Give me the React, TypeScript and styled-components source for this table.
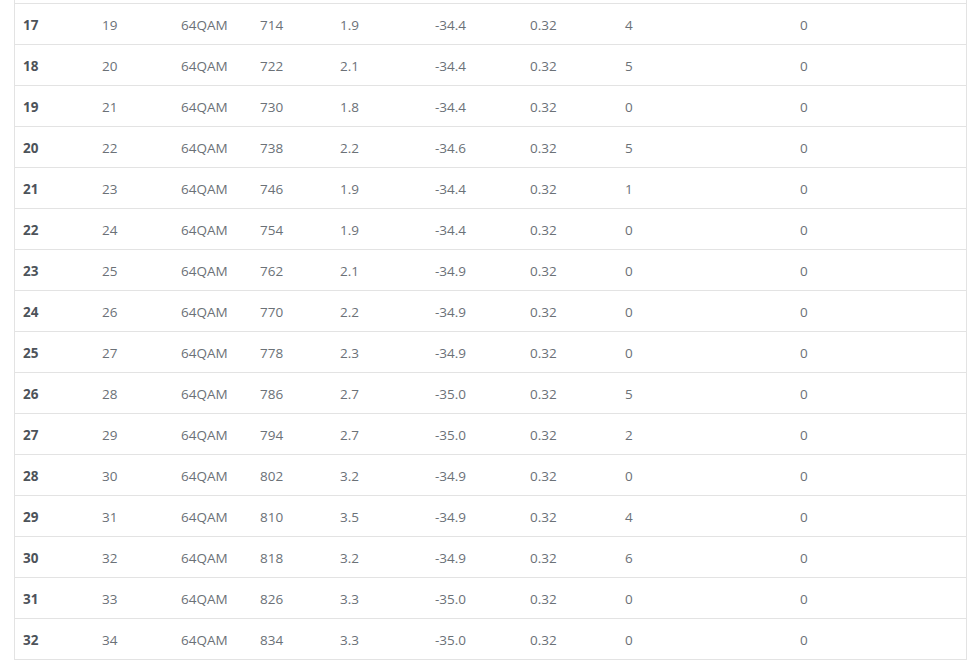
import React from 'react'
import styled, { createGlobalStyle } from 'styled-components'

const GlobalStyle = createGlobalStyle`
	body {
		margin: 0;
		background: #fff;
		font-family: "Open Sans", "Liberation Sans", sans-serif;
	}
`

const Page = styled.div`
	padding: 0 8px 0 14px;
`

const Frame = styled.div`
	border-left: 1px solid #e3e3e3;
	border-right: 1px solid #e3e3e3;
	padding-top: 3px;
	width: 953px;
	box-sizing: border-box;
`

const Table = styled.table`
	width: 100%;
	border-collapse: collapse;
	table-layout: fixed;
	font-size: 13.5px;
	color: #6b7177;
`

const Row = styled.tr`
	height: 41px;
	border-top: 1px solid #e3e3e3;
	border-bottom: 1px solid #e3e3e3;
`

interface CellProps {
	width: number
	bold?: boolean
}

const Cell = styled.td<CellProps>`
	box-sizing: border-box;
	width: ${(props) => props.width}px;
	padding: 2px 0 0 8px;
	text-align: left;
	vertical-align: middle;
	white-space: nowrap;
	font-weight: ${(props) => (props.bold ? 700 : 400)};
	color: ${(props) => (props.bold ? '#4d535a' : '#6b7177')};
`

const widths = [79, 79, 79, 80, 95, 95, 95, 175, 174]

const rows = [
	[17, 19, '64QAM', 714, '1.9', '-34.4', '0.32', 4, 0],
	[18, 20, '64QAM', 722, '2.1', '-34.4', '0.32', 5, 0],
	[19, 21, '64QAM', 730, '1.8', '-34.4', '0.32', 0, 0],
	[20, 22, '64QAM', 738, '2.2', '-34.6', '0.32', 5, 0],
	[21, 23, '64QAM', 746, '1.9', '-34.4', '0.32', 1, 0],
	[22, 24, '64QAM', 754, '1.9', '-34.4', '0.32', 0, 0],
	[23, 25, '64QAM', 762, '2.1', '-34.9', '0.32', 0, 0],
	[24, 26, '64QAM', 770, '2.2', '-34.9', '0.32', 0, 0],
	[25, 27, '64QAM', 778, '2.3', '-34.9', '0.32', 0, 0],
	[26, 28, '64QAM', 786, '2.7', '-35.0', '0.32', 5, 0],
	[27, 29, '64QAM', 794, '2.7', '-35.0', '0.32', 2, 0],
	[28, 30, '64QAM', 802, '3.2', '-34.9', '0.32', 0, 0],
	[29, 31, '64QAM', 810, '3.5', '-34.9', '0.32', 4, 0],
	[30, 32, '64QAM', 818, '3.2', '-34.9', '0.32', 6, 0],
	[31, 33, '64QAM', 826, '3.3', '-35.0', '0.32', 0, 0],
	[32, 34, '64QAM', 834, '3.3', '-35.0', '0.32', 0, 0]
]

const App: React.FC = () => {
	return (
		<>
			<GlobalStyle />
			<Page>
				<Frame>
					<Table>
						<tbody>
							{rows.map((row, index) => (
								<Row key={index}>
									{row.map((value, i) => (
										<Cell key={i} width={widths[i]} bold={i === 0}>
											{value}
										</Cell>
									))}
								</Row>
							))}
						</tbody>
					</Table>
				</Frame>
			</Page>
		</>
	)
}

export default App
